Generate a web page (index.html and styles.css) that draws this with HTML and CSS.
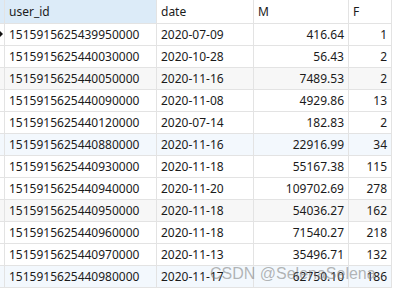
FILE: index.html
```html
<!DOCTYPE html>
<html lang="zh">
<head>
    <meta charset="UTF-8">
    <title>user table</title>
    <link rel="stylesheet" href="styles.css">
</head>
<body>
    <div class="grid-wrap">
        <table class="grid">
            <thead>
                <tr>
                    <th class="gutter sel"></th>
                    <th class="c-id sel">user_id</th>
                    <th class="c-date">date</th>
                    <th class="c-m">M</th>
                    <th class="c-f">F</th>
                </tr>
            </thead>
            <tbody>
                <tr><td class="gutter"><span class="cur"></span></td><td>1515915625439950000</td><td>2020-07-09</td><td class="num">416.64</td><td class="num">1</td></tr>
                <tr><td class="gutter"></td><td>1515915625440030000</td><td>2020-10-28</td><td class="num">56.43</td><td class="num">2</td></tr>
                <tr class="alt-grey"><td class="gutter"></td><td>1515915625440050000</td><td>2020-11-16</td><td class="num">7489.53</td><td class="num">2</td></tr>
                <tr><td class="gutter"></td><td>1515915625440090000</td><td>2020-11-08</td><td class="num">4929.86</td><td class="num">13</td></tr>
                <tr><td class="gutter"></td><td>1515915625440120000</td><td>2020-07-14</td><td class="num">182.83</td><td class="num">2</td></tr>
                <tr class="alt-blue"><td class="gutter"></td><td>1515915625440880000</td><td>2020-11-16</td><td class="num">22916.99</td><td class="num">34</td></tr>
                <tr><td class="gutter"></td><td>1515915625440930000</td><td>2020-11-18</td><td class="num">55167.38</td><td class="num">115</td></tr>
                <tr><td class="gutter"></td><td>1515915625440940000</td><td>2020-11-20</td><td class="num">109702.69</td><td class="num">278</td></tr>
                <tr class="alt-grey"><td class="gutter"></td><td>1515915625440950000</td><td>2020-11-18</td><td class="num">54036.27</td><td class="num">162</td></tr>
                <tr><td class="gutter"></td><td>1515915625440960000</td><td>2020-11-18</td><td class="num">71540.27</td><td class="num">218</td></tr>
                <tr><td class="gutter"></td><td>1515915625440970000</td><td>2020-11-13</td><td class="num">35496.71</td><td class="num">132</td></tr>
                <tr class="alt-blue"><td class="gutter"></td><td>1515915625440980000</td><td>2020-11-17</td><td class="num">62750.10</td><td class="num">186</td></tr>
            </tbody>
        </table>
        <div class="watermark">CSDN @SelenaSelena</div>
    </div>
</body>
</html>
```

FILE: styles.css
```css
html, body {
    margin: 0;
    padding: 0;
    background-color: #fff;
    overflow: hidden;
}
.grid-wrap {
    position: relative;
    width: 398px;
    height: 289px;
}
.grid {
    border-collapse: separate;
    border-spacing: 0;
    table-layout: fixed;
    width: 392px;
    font-family: "Noto Sans", "Open Sans", sans-serif;
    font-size: 12px;
    color: #1b1b1b;
}
th, td {
    border-right: 1px solid #e3e3e3;
    border-bottom: 1px solid #e3e3e3;
    padding: 0 4px;
    white-space: nowrap;
    overflow: hidden;
    text-align: left;
    box-sizing: border-box;
}
th {
    height: 24px;
    font-weight: normal;
    background-color: #fff;
}
td {
    height: 22px;
}
th.sel {
    background-color: #dcebf8;
}
.gutter {
    width: 5px;
    padding: 0;
    position: relative;
}
.c-id { width: 152px; }
.c-date { width: 97px; }
.c-m { width: 95px; }
.c-f { width: 43px; }
.num {
    text-align: right;
}
.alt-grey td {
    background-color: #f7f7f7;
}
.alt-blue td {
    background-color: #f3f8fd;
}
.cur {
    position: absolute;
    left: 0;
    top: 7px;
    width: 0;
    height: 0;
    border-top: 3px solid transparent;
    border-bottom: 3px solid transparent;
    border-left: 3px solid #111;
}
.watermark {
    position: absolute;
    left: 210px;
    top: 265px;
    font-family: "Liberation Sans", Arial, sans-serif;
    font-size: 16px;
    color: rgba(120, 120, 120, 0.55);
    white-space: nowrap;
}
```
